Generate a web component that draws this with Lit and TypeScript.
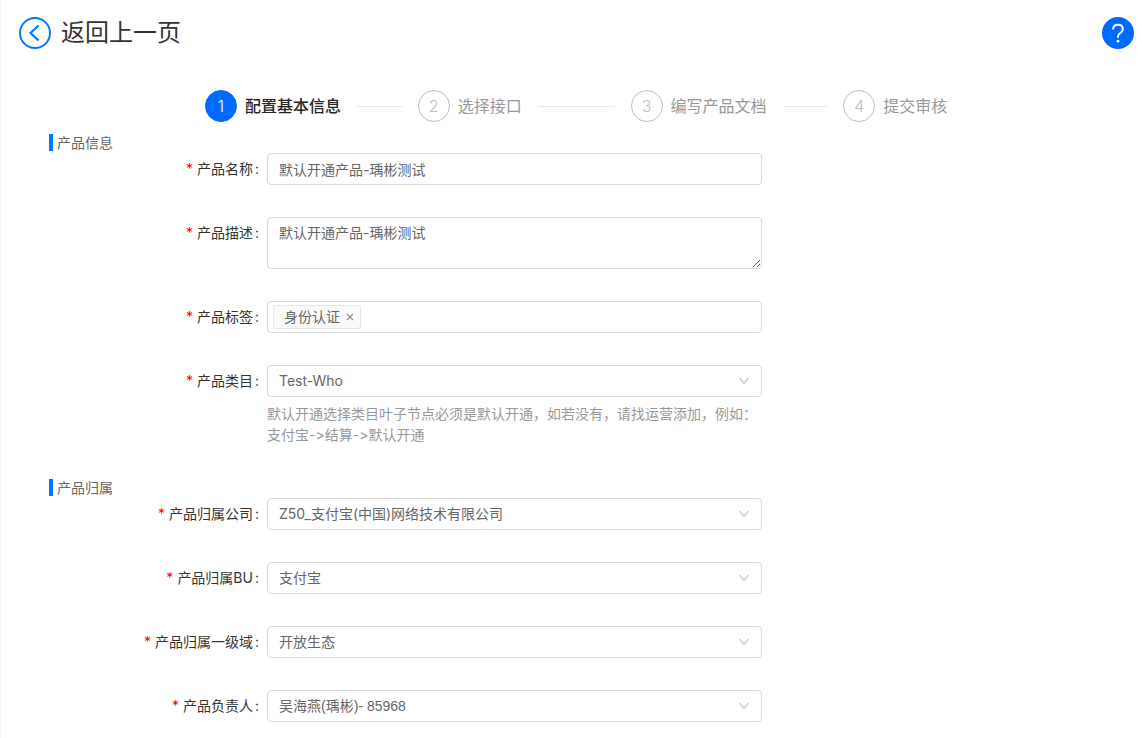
import { LitElement, html, css, svg, nothing } from "lit";
import { customElement, property } from "lit/decorators.js";
import { classMap } from "lit/directives/class-map.js";

const STEPS = ["配置基本信息", "选择接口", "编写产品文档", "提交审核"];

const OWNERSHIP = [
  { id: "company", label: "产品归属公司", value: "Z50_支付宝(中国)网络技术有限公司" },
  { id: "bu", label: "产品归属BU", value: "支付宝" },
  { id: "domain", label: "产品归属一级域", value: "开放生态" },
  { id: "owner", label: "产品负责人", value: "吴海燕(瑀彬)- 85968", person: true },
];

const chevron = svg`<svg class="chevron" viewBox="0 0 12 12" width="12" height="12" aria-hidden="true">
  <path d="M1.5 3 6 8.3 10.5 3" fill="none" stroke="#bfbfbf" stroke-width="1.1"/></svg>`;

@customElement("step-bar")
class StepBar extends LitElement {
  @property({ type: Number }) current = 0;

  static styles = css`
    :host { display: block; }
    .steps { display: flex; margin: 0; padding: 0; list-style: none; }
    .step {
      display: flex; flex: 1 1 0; align-items: center; gap: 8px;
      margin-right: 16px; font-size: 16px; line-height: 32px; color: #999;
      white-space: nowrap;
    }
    .step:last-child { flex: none; margin-right: 0; }
    .number {
      box-sizing: border-box; flex: none; width: 32px; height: 32px;
      border: 1px solid #bfbfbf; border-radius: 50%;
      line-height: 30px; text-align: center; color: #bfbfbf; font-weight: 300;
    }
    .line { flex: 1; height: 1px; margin-left: 8px; background: #e8e8e8; }
    .current { color: #262626; font-weight: 500; }
    .current .number { background: #006aff; border-color: #006aff; color: #fff; }
  `;

  render() {
    return html`<ol class="steps">
      ${STEPS.map((title, i) => html`
        <li class=${classMap({ step: true, current: i === this.current })}>
          <span class="number">${i + 1}</span><span>${title}</span>
          ${i < STEPS.length - 1 ? html`<span class="line"></span>` : nothing}
        </li>`)}
    </ol>`;
  }
}

@customElement("app-root")
class AppRoot extends LitElement {
  static styles = css`
    :host {
      display: block; box-sizing: border-box; min-height: 100vh;
      border-left: 1px solid #f3f3f3; background: #fff; color: #666;
      font: 14px/22px Inter, "Noto Sans CJK SC", sans-serif;
      font-variant-ligatures: no-contextual;
    }
    *, *::before { box-sizing: border-box; }
    input, textarea, select, button { font: inherit; color: inherit; margin: 0; }
    button { padding: 0; border: 0; background: none; cursor: pointer; }
    .header {
      display: flex; justify-content: space-between; align-items: center;
      padding: 16px 9px 16px 18px;
    }
    .back {
      display: flex; align-items: center; gap: 10px;
      color: #333; font-size: 24px; line-height: 34px; text-decoration: none;
    }
    .icon { display: block; width: 32px; height: 32px; }
    .progress { width: 65%; margin: 24px 0 12px 204px; }
    .form { display: block; padding: 0 48px 16px; }
    .section { margin-bottom: 32px; }
    .section:last-child { margin-bottom: 0; }
    .heading {
      margin: 0 0 2px; padding-left: 4px; border-left: 4px solid #0079ff;
      font-size: 14px; line-height: 17px; font-weight: 400;
    }
    .fields { display: grid; gap: 32px; }
    .field { display: grid; grid-template-columns: 218fr 495fr 333fr; align-items: start; }
    .label { padding-right: 8px; line-height: 32px; text-align: right; color: #333; }
    .label::before { content: "*"; margin-right: 4px; color: #f5000f; }
    .label::after { content: ":"; margin-left: 2px; }
    .control { position: relative; display: block; }
    .box {
      display: block; width: 100%; height: 32px; padding: 4px 11px;
      border: 1px solid #d9d9d9; border-radius: 4px; background: #fff; outline: none;
    }
    .area { height: 52px; resize: vertical; }
    .picker { appearance: none; }
    .person { font-family: "Liberation Sans", "Noto Sans CJK SC", sans-serif; }
    .chevron { position: absolute; right: 12px; top: 10px; pointer-events: none; }
    .tags { display: flex; align-items: center; padding: 0 5px; }
    .tag {
      display: flex; align-items: center; gap: 6px; flex: none; height: 24px; padding: 0 6px 0 10px;
      border: 1px solid #e8e8e8; border-radius: 2px; background: #fafafa;
    }
    .remove { display: flex; }
    .tag-input { flex: 1; min-width: 0; border: 0; outline: none; background: none; }
    .help { margin: 0; padding: 6px 0 2px; line-height: 21px; color: #999; }
  `;

  private picker(id: string, label: string, value: string, help?: string, person = false) {
    return html`<div class="field">
      <label class="label" for=${id}>${label}</label>
      <div class="control">
        <select class=${classMap({ box: true, picker: true, person })} id=${id}><option selected>${value}</option></select>
        ${chevron}
        ${help ? html`<p class="help">${help}</p>` : nothing}
      </div>
    </div>`;
  }

  render() {
    return html`
      <header class="header" lang="zh-CN">
        <a class="back" href="#">
          <svg class="icon" viewBox="0 0 32 32" aria-hidden="true" fill="none" stroke="#0079ff" stroke-width="2">
            <circle cx="16" cy="16" r="15"/>
            <path d="M19.5 8.5 11.5 16l8 7.5" stroke-width="2.2"/>
          </svg>
          <span>返回上一页</span>
        </a>
        <button type="button" aria-label="帮助">
          <svg class="icon" viewBox="0 0 32 32" aria-hidden="true">
            <circle cx="16" cy="16" r="16" fill="#006aff"/>
            <path d="M11.1 12.4c0-2.9 2-4.7 4.9-4.7 2.8 0 4.8 1.7 4.8 4.3 0 1.9-1 2.9-2.5 4-1.6 1.1-2.3 1.9-2.3 3.6v1.2" fill="none" stroke="#fff" stroke-width="2"/>
            <circle cx="16" cy="24.2" r="1.4" fill="#fff"/>
          </svg>
        </button>
      </header>
      <step-bar class="progress" lang="zh-CN"></step-bar>
      <form class="form" lang="zh-CN">
        <section class="section">
          <h2 class="heading">产品信息</h2>
          <div class="fields">
            <div class="field">
              <label class="label" for="name">产品名称</label>
              <input class="box" id="name" .value=${"默认开通产品-瑀彬测试"}>
            </div>
            <div class="field">
              <label class="label" for="desc">产品描述</label>
              <textarea class="box area" id="desc" .value=${"默认开通产品-瑀彬测试"}></textarea>
            </div>
            <div class="field">
              <label class="label" for="tags">产品标签</label>
              <div class="box tags">
                <span class="tag">身份认证
                  <button class="remove" type="button" aria-label="移除">
                    <svg viewBox="0 0 8 8" width="8" height="8" aria-hidden="true">
                      <path d="M1 1l6 6M7 1 1 7" stroke="#8c8c8c" stroke-width="1.1"/>
                    </svg>
                  </button>
                </span>
                <input class="tag-input" id="tags">
              </div>
            </div>
            ${this.picker("category", "产品类目", "Test-Who",
              "默认开通选择类目叶子节点必须是默认开通，如若没有，请找运营添加，例如：支付宝->结算->默认开通")}
          </div>
        </section>
        <section class="section">
          <h2 class="heading">产品归属</h2>
          <div class="fields">
            ${OWNERSHIP.map((f) => this.picker(f.id, f.label, f.value, undefined, f.person))}
          </div>
        </section>
      </form>`;
  }
}
